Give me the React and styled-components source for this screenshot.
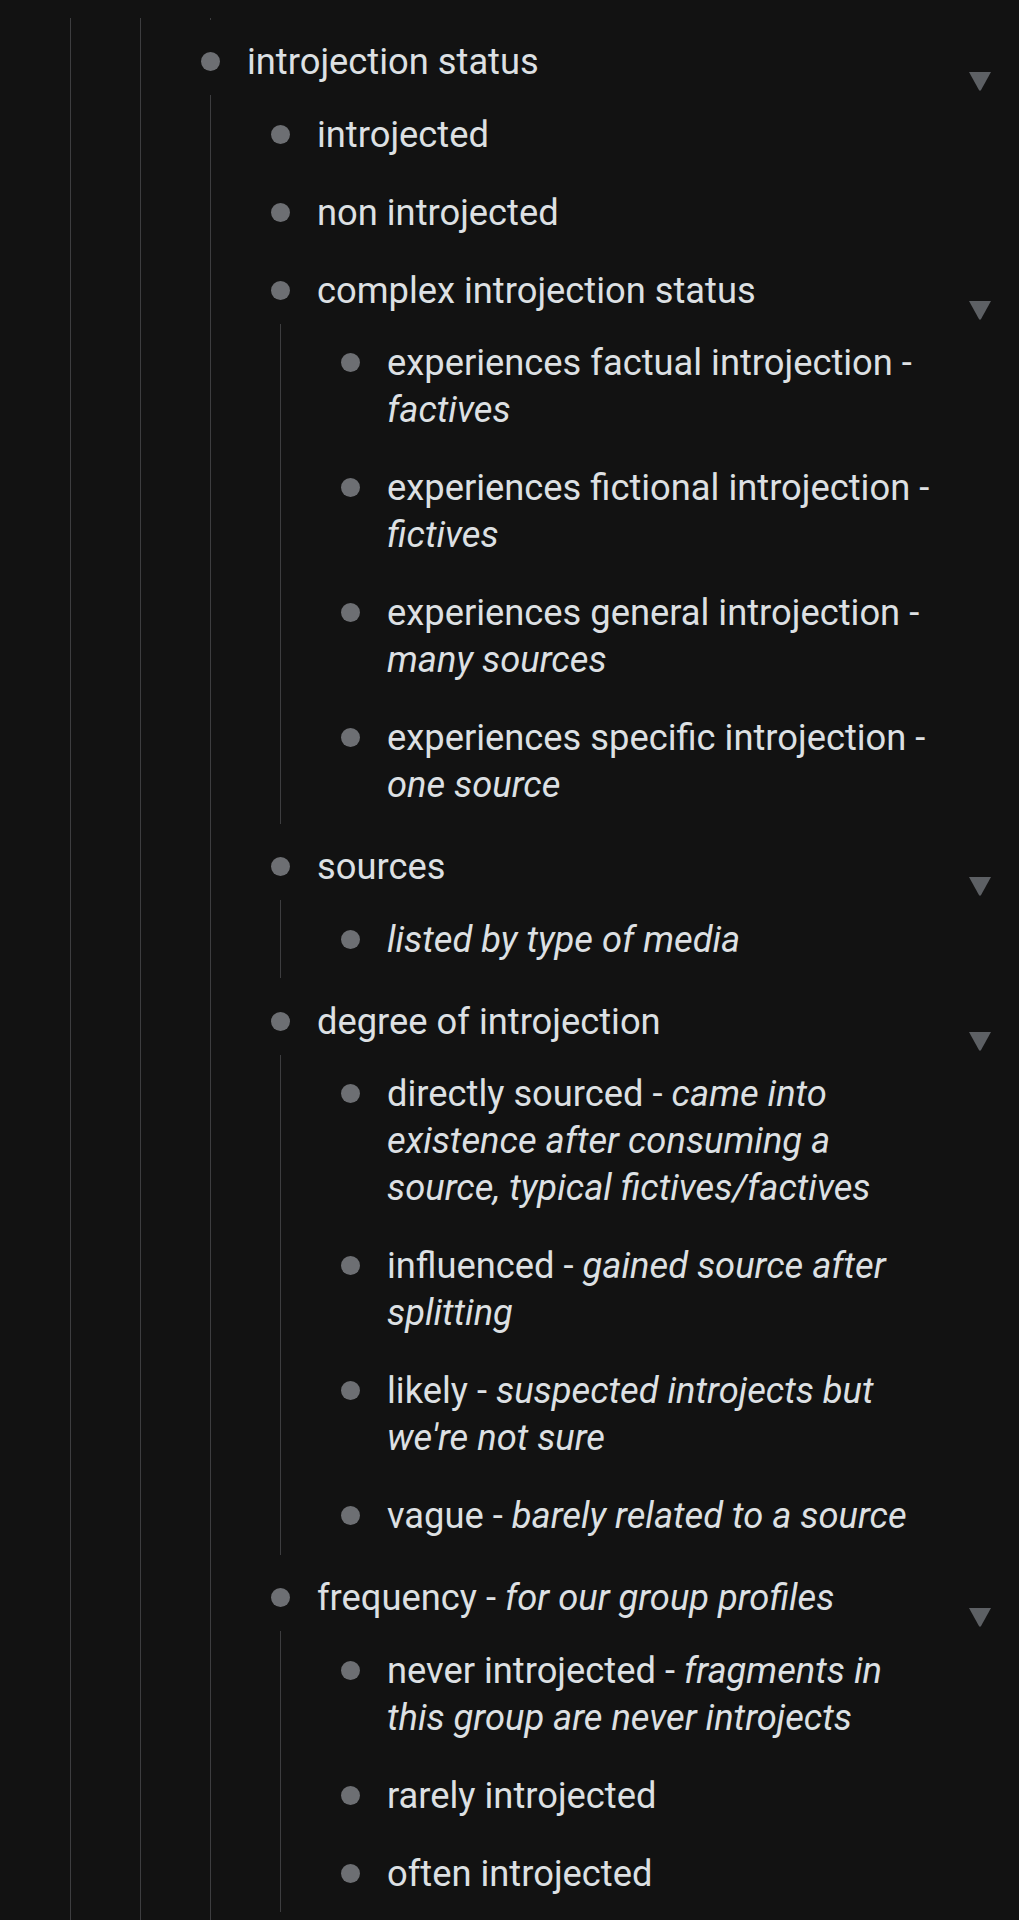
import React from "react";
import styled, { createGlobalStyle } from "styled-components";

const GlobalStyle = createGlobalStyle`
  html, body {
    margin: 0;
    padding: 0;
    background: #121212;
  }
  body {
    font-family: Roboto, "Noto Sans", "Liberation Sans", sans-serif;
    color: #dde0e3;
  }
`;

const Page = styled.div`
  min-height: 100vh;
  box-sizing: border-box;
  padding: 18px 9px 0 50px;
  background: #121212;
`;

const Children = styled.div`
  margin-left: 20px;
  padding-left: 49px;
  border-left: 1px solid #3d3d3f;
  margin-top: ${(p) => (p.$ancestor ? "0" : "-5.5px")};
  margin-bottom: ${(p) => (p.$ancestor ? "0" : "4px")};
  padding-bottom: ${(p) => (p.$open ? "60px" : "0")};
`;

const Tail = styled.div`
  margin-left: 20px;
  height: 2px;
  border-left: 1px solid #3d3d3f;
  margin-bottom: 2.5px;
`;

const Row = styled.div`
  display: flex;
  align-items: flex-start;
  padding: 15.5px 0;
`;

const BulletCell = styled.div`
  width: 40px;
  height: 47px;
  flex-shrink: 0;
  display: flex;
  align-items: center;
  justify-content: center;
`;

const Dot = styled.span`
  width: 19px;
  height: 19px;
  border-radius: 50%;
  background: #6d6f73;
`;

const Label = styled.div`
  flex: 1;
  margin-left: 17px;
  margin-right: 12px;
  font-size: 36.3px;
  line-height: 47px;
  color: #dde0e3;
`;

const Note = styled.em`
  font-style: italic;
`;

const Toggle = styled.div`
  width: 60px;
  height: 47px;
  box-sizing: border-box;
  flex-shrink: 0;
  display: flex;
  justify-content: center;
  padding-top: 34px;
  overflow: visible;
  svg {
    display: block;
    flex-shrink: 0;
  }
`;

const Caret = () => (
  <svg width="22" height="19" viewBox="0 0 22 19">
    <path d="M0 0 H22 L12.2 17.8 Q11 19.6 9.8 17.8 Z" fill="#5d6064" />
  </svg>
);

const tree = [
  {
    label: "introjection status",
    open: true,
    children: [
      { label: "introjected" },
      { label: "non introjected" },
      {
        label: "complex introjection status",
        children: [
          { label: "experiences factual introjection - ", note: "factives" },
          { label: "experiences fictional introjection - ", note: "fictives" },
          { label: "experiences general introjection - ", note: "many sources" },
          { label: "experiences specific introjection - ", note: "one source" },
        ],
      },
      {
        label: "sources",
        children: [{ note: "listed by type of media" }],
      },
      {
        label: "degree of introjection",
        children: [
          {
            label: "directly sourced - ",
            note: "came into existence after consuming a source, typical fictives/factives",
          },
          { label: "influenced - ", note: "gained source after splitting" },
          { label: "likely - ", note: "suspected introjects but we're not sure" },
          { label: "vague - ", note: "barely related to a source" },
        ],
      },
      {
        label: "frequency - ",
        note: "for our group profiles",
        children: [
          {
            label: "never introjected - ",
            note: "fragments in this group are never introjects",
          },
          { label: "rarely introjected" },
          { label: "often introjected" },
        ],
      },
    ],
  },
];

function Node({ item }) {
  const hasKids = item.children && item.children.length > 0;
  return (
    <div>
      <Row>
        <BulletCell>
          <Dot />
        </BulletCell>
        <Label>
          {item.label}
          {item.note && <Note>{item.note}</Note>}
        </Label>
        <Toggle>{hasKids && <Caret />}</Toggle>
      </Row>
      {hasKids && (
        <Children $open={item.open}>
          {item.children.map((c, i) => (
            <Node key={i} item={c} />
          ))}
        </Children>
      )}
    </div>
  );
}

export default function App() {
  return (
    <>
      <GlobalStyle />
      <Page>
        <Children $ancestor $open>
          <Children $ancestor $open>
            <Tail />
            {tree.map((n, i) => (
              <Node key={i} item={n} />
            ))}
          </Children>
        </Children>
      </Page>
    </>
  );
}
